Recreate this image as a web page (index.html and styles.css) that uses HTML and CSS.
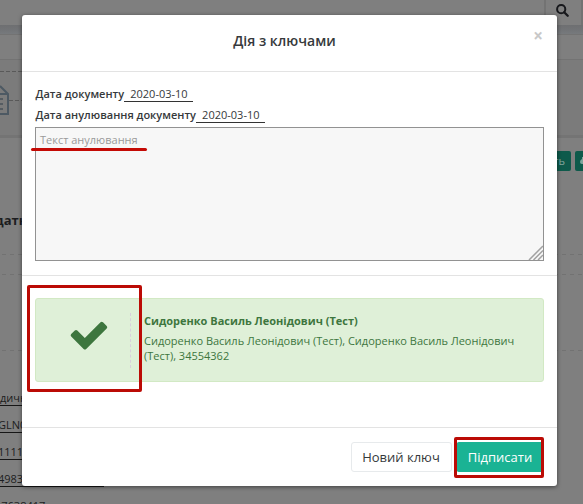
FILE: index.html
```html
<!DOCTYPE html>
<html lang="uk">
<head>
<meta charset="utf-8">
<title>Дія з ключами</title>
<link rel="stylesheet" href="styles.css">
</head>
<body>
<div class="page">
  <header class="topbar">
    <div class="search"><svg width="13" height="13" viewBox="0 0 13 13"><circle cx="5.2" cy="5.2" r="4.1" fill="none" stroke="#17181c" stroke-width="2"/><path d="M8.2 8.2l3.5 3.5" stroke="#17181c" stroke-width="2.3" stroke-linecap="round"/></svg></div>
  </header>
  <div class="shade"></div>
  <div class="strip"></div>
  <section class="steps">
    <div class="dash-top"></div>
    <div class="step">
      <svg width="9" height="31" viewBox="0 0 9 31" fill="none" stroke-width="2"><path d="M0 1l8 8v20H0M0 9h7" stroke="#4d5963"/><path d="M0 14h3M0 19h3M0 24h3" stroke="#555c62"/></svg>
      <div class="dash-side"></div>
    </div>
  </section>
  <main class="content">
    <div class="actions"><span class="chip chip-text">ть</span><span class="chip chip-icon"><svg width="8" height="12" viewBox="0 0 8 12"><path d="M8 2H7v2Q5 5 5 7t2 2h1z" fill="#7fa69d"/></svg></span></div>
    <div class="subtitle">датк</div>
    <div class="rule rule-a"></div>
    <div class="rule rule-b"></div>
    <div class="rule rule-c"></div>
    <div class="fields">
      <div class="field first">дичн</div>
      <div class="field">GLN0</div>
      <div class="field">1111</div>
      <div class="field">4983</div>
      <div class="field last">17638417</div>
    </div>
  </main>
</div>
<div class="overlay">
  <div class="modal">
    <header class="modal-head">
      <h4>Дія з ключами</h4>
      <span class="close">×</span>
    </header>
    <section class="form">
      <div class="date"><b>Дата документу</b><span>2020-03-10</span></div>
      <div class="date"><b>Дата анулювання документу</b><span>2020-03-10</span></div>
      <div class="area">Текст анулювання
        <svg class="grip" width="15" height="15" viewBox="0 0 15 15" stroke="#a2a2a2" stroke-width="1.5"><path d="M1 15L15 1M5.5 15L15 5.5M10 15l5-5"/></svg>
      </div>
    </section>
    <section class="result">
      <div class="alert">
        <div class="tick"><svg width="38" height="30" viewBox="0 0 38 30"><path d="M1.2 13.1L4.8 9.5Q6 8.4 7.3 9.5L14.8 17 30.5 1.2Q31.7 .1 33 1.2L36.7 4.9Q37.9 6.1 36.7 7.4L16.2 27.9Q14.9 29.1 13.6 27.9L1.2 15.6Q0 14.4 1.2 13.1Z" fill="#3d763e"/></svg></div>
        <div class="signer"><b>Сидоренко Василь Леонідович (Тест)</b><p>Сидоренко Василь Леонідович (Тест), Сидоренко Василь Леонідович (Тест), 34554362</p></div>
      </div>
    </section>
    <footer class="buttons"><button class="white">Новий ключ</button><button class="primary">Підписати</button></footer>
  </div>
</div>
<div class="mark mark-line"></div>
<div class="mark mark-tick"></div>
<div class="mark mark-sign"></div>
</body>
</html>
```
FILE: styles.css
```css
* { box-sizing: border-box; }
body { margin: 0; width: 583px; height: 504px; overflow: hidden; background: #7f7f7f; font-family: "Open Sans", "Noto Sans", sans-serif; font-size: 11px; color: #36393b; }
.page { height: 504px; overflow: hidden; color: #1c1d20; }
.topbar { height: 25px; display: flex; justify-content: flex-end; }
.search { width: 39px; height: 25px; border-left: 2px solid #737373; border-right: 2px solid #737373; padding: 4px 0 0 10px; }
.search svg { display: block; }
.shade { height: 10px; background: linear-gradient(#6e6f71, #727477 60%, #777a7d); border-bottom: 1px solid #737373; }
.strip { height: 25px; border-bottom: 1px solid #737373; }
.steps { height: 78px; padding-top: 11px; background: #7b7b7b; border-bottom: 3px solid #747474; }
.dash-top { width: 22px; height: 1px; background: repeating-linear-gradient(90deg, #595959 0 4px, transparent 4px 6px); }
.step { display: flex; padding-top: 13px; }
.dash-side { width: 13px; height: 1px; margin-top: 15px; background: repeating-linear-gradient(90deg, #595959 0 4px, transparent 4px 6px); }
.content { height: 366px; padding-top: 13px; }
.actions { display: flex; gap: 4px; justify-content: flex-end; }
.chip { height: 20px; background: #0e5a4b; color: #83a79f; border-radius: 2px; line-height: 20px; }
.chip-text { width: 40px; text-align: right; padding-right: 6px; }
.chip-icon { width: 8px; border-radius: 2px 0 0 2px; padding-top: 4px; line-height: 0; }
.subtitle { margin: 39px 0 0 -5px; height: 20px; line-height: 20px; font-size: 13px; font-weight: 700; }
.rule { height: 1px; background: repeating-linear-gradient(90deg, transparent 0 2px, #727272 2px 6px, transparent 6px 8px); }
.rule-a { margin-top: 24px; }
.rule-b { margin-top: 19px; }
.rule-c { margin-top: 75px; }
.fields { padding-top: 39px; }
.field { width: 104px; height: 16px; line-height: 15px; border-bottom: 1px solid #161616; margin-bottom: 11px; text-indent: -2px; }
.field.first { text-indent: 0; }
.field.last { border: 0; text-indent: -5px; }
.overlay { position: absolute; inset: 0; padding: 15px 26px 0 22px; }
.modal { height: 471px; background: #fff; border-radius: 3px; box-shadow: 0 1px 4px rgba(0,0,0,.5); }
.modal-head { height: 57px; border-bottom: 1px solid #e3e3e3; display: flex; position: relative; justify-content: center; }
h4 { margin: 0; padding: 16px 10px 0 0; font-size: 14px; line-height: 20px; font-weight: 600; }
.close { position: absolute; right: 14px; top: 11px; font-size: 17px; line-height: 20px; font-weight: 700; color: #c8c8c8; }
.form { height: 204px; padding: 14px 13px 0; border-bottom: 1px solid #e3e3e3; }
.date { display: flex; height: 21px; align-items: flex-start; line-height: 15px; padding-left: .5px; }
.date b { font-weight: 600; }
.date span { height: 16px; padding: 0 5.5px 0 6.2px; border-bottom: 1px solid #333; }
.area { height: 134px; margin-top: -1px; border: 1px solid #929292; background: #f7f7f7; padding: 4px 4px; line-height: 15px; color: #9a9a9a; position: relative; }
.grip { position: absolute; right: 0; bottom: 0; }
.result { height: 152px; padding: 22px 13px 0; border-bottom: 1px solid #e3e3e3; }
.alert { height: 84px; background: #dff0d8; border: 1px solid #d2e9c4; border-radius: 3px; color: #3d763e; display: flex; padding: 14px 13px; }
.tick { width: 82px; height: 55px; border-right: 1px dashed #d8d0dd; padding: 8px 0 0 21px; }
.tick svg { display: block; }
.signer { flex: 1; padding-left: 13px; line-height: 15px; }
.signer b { display: block; }
.signer p { margin: 5px 0 0; width: 385px; }
.buttons { display: flex; justify-content: flex-end; gap: 4px; padding: 14px 13px 0; }
button { height: 30px; padding: 0; border: 1px solid #e7eaec; border-radius: 3px; font: 13px "Open Sans", "Noto Sans", sans-serif; }
.white { width: 101px; color: #36393b; background: #fff; padding-right: 1px; }
.primary { width: 88px; background: #1ab394; border-color: #1ab394; color: #fff; }
.mark { position: absolute; border: 3px solid #bb0b05; border-radius: 2px; }
.mark-line { left: 31px; top: 148px; width: 116px; height: 3px; border-width: 0; background: #c40a05; }
.mark-tick { left: 27px; top: 285px; width: 115px; height: 107px; }
.mark-sign { left: 454px; top: 437px; width: 90px; height: 41px; }
```
